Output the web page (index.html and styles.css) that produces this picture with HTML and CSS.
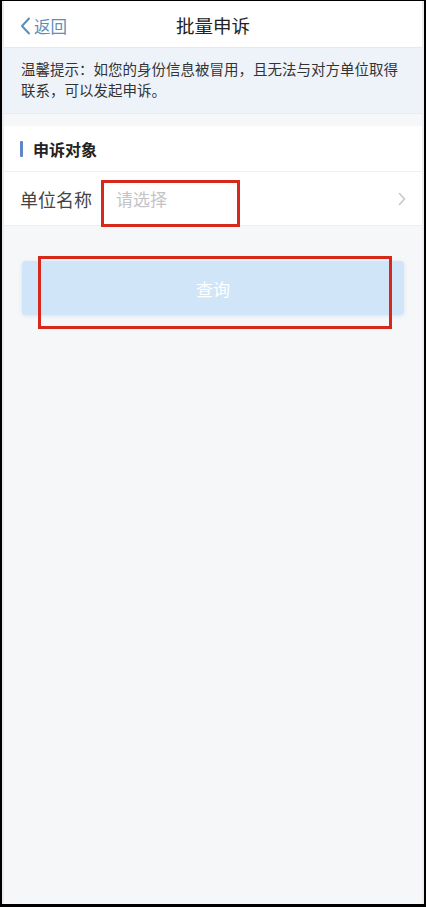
FILE: index.html
```html
<!DOCTYPE html>
<html lang="zh-CN">
<head>
    <meta charset="UTF-8">
    <meta name="viewport" content="width=device-width, initial-scale=1.0">
    <title>批量申诉</title>
    <link rel="stylesheet" href="styles.css">
</head>
<body>
    <div class="phone">
        <header class="navbar">
            <a class="back" href="#">
                <svg width="11" height="18" viewBox="0 0 11 18"><path d="M9 1.5 L2 9 L9 16.5" fill="none" stroke="#5b8fb8" stroke-width="2" stroke-linecap="round" stroke-linejoin="round"/></svg>
                <span>返回</span>
            </a>
            <h1 class="title">批量申诉</h1>
        </header>

        <div class="tip">温馨提示：如您的身份信息被冒用，且无法与对方单位取得联系，可以发起申诉。</div>

        <section class="panel">
            <div class="section-head">
                <span class="bar"></span>
                <span>申诉对象</span>
            </div>
            <div class="row">
                <span class="label">单位名称</span>
                <span class="placeholder">请选择</span>
                <svg class="arrow" width="8" height="14" viewBox="0 0 8 14"><path d="M1.5 1.5 L6.5 7 L1.5 12.5" fill="none" stroke="#c8c8cc" stroke-width="1.6" stroke-linecap="round" stroke-linejoin="round"/></svg>
            </div>
        </section>

        <div class="actions">
            <button class="btn-query">查询</button>
        </div>

        <!-- annotation boxes drawn over the screenshot -->
        <div class="mark mark-field"></div>
        <div class="mark mark-button"></div>
    </div>
</body>
</html>
```

FILE: styles.css
```css
/* Base */
* {
    margin: 0;
    padding: 0;
    box-sizing: border-box;
}

body {
    background: #000;
    font-family: "PingFang SC", "Noto Sans CJK SC", "Noto Sans", sans-serif;
    color: #333;
    width: 426px;
    height: 907px;
    overflow: hidden;
}

.phone {
    position: relative;
    margin: 1px 2px 0 2px;
    height: 903px;
    background: #f6f7f9;
    border-left: 2px solid #ececef;
    border-right: 2px solid #ececef;
    overflow: hidden;
}

/* Nav bar */
.navbar {
    position: relative;
    height: 47px;
    background: #fff;
    border-bottom: 1px solid #e6e8ec;
    display: flex;
    align-items: center;
    justify-content: center;
}

.back {
    position: absolute;
    left: 16px;
    top: 13px;
    display: flex;
    align-items: center;
    gap: 3px;
    color: #5b8fb8;
    text-decoration: none;
    font-size: 16.5px;
}

.title {
    font-size: 18.5px;
    font-weight: normal;
    color: #222;
    margin-top: 2px;
}

/* Tip */
.tip {
    background: #eef3fa;
    padding: 10px 14px 9px 17px;
    font-size: 14.5px;
    line-height: 21px;
    color: #333;
    border-bottom: 1px solid #e8ecf2;
    height: 66px;
}

/* Panel */
.panel {
    margin-top: 12px;
    background: #fff;
}

.section-head {
    height: 46px;
    display: flex;
    align-items: center;
    padding-left: 16px;
    font-size: 16px;
    font-weight: bold;
    color: #222;
    gap: 10px;
    border-bottom: 1px solid #eef0f3;
}

.bar {
    width: 3px;
    height: 16px;
    border-radius: 1px;
    background: #5d87c8;
}

.row {
    height: 54px;
    display: flex;
    align-items: center;
    padding: 0 16px 0 16px;
    border-bottom: 1px solid #eceef1;
}

.label {
    font-size: 18px;
    color: #444;
    width: 96px;
}

.placeholder {
    flex: 1;
    font-size: 17px;
    color: #c4c4c8;
}

/* Button */
.actions {
    padding: 35px 18px 0 18px;
}

.btn-query {
    width: 100%;
    height: 54px;
    border: none;
    border-radius: 4px;
    background: #d0e5f8;
    color: #fff;
    font-family: inherit;
    font-size: 17px;
    box-shadow: 0 1px 4px rgba(180, 200, 225, 0.4);
}

/* Red annotation boxes */
.mark {
    position: absolute;
    border: 3px solid #d6281b;
}

.mark-field {
    left: 97px;
    top: 179px;
    width: 139px;
    height: 47px;
}

.mark-button {
    left: 34px;
    top: 255px;
    width: 354px;
    height: 73px;
}
```
